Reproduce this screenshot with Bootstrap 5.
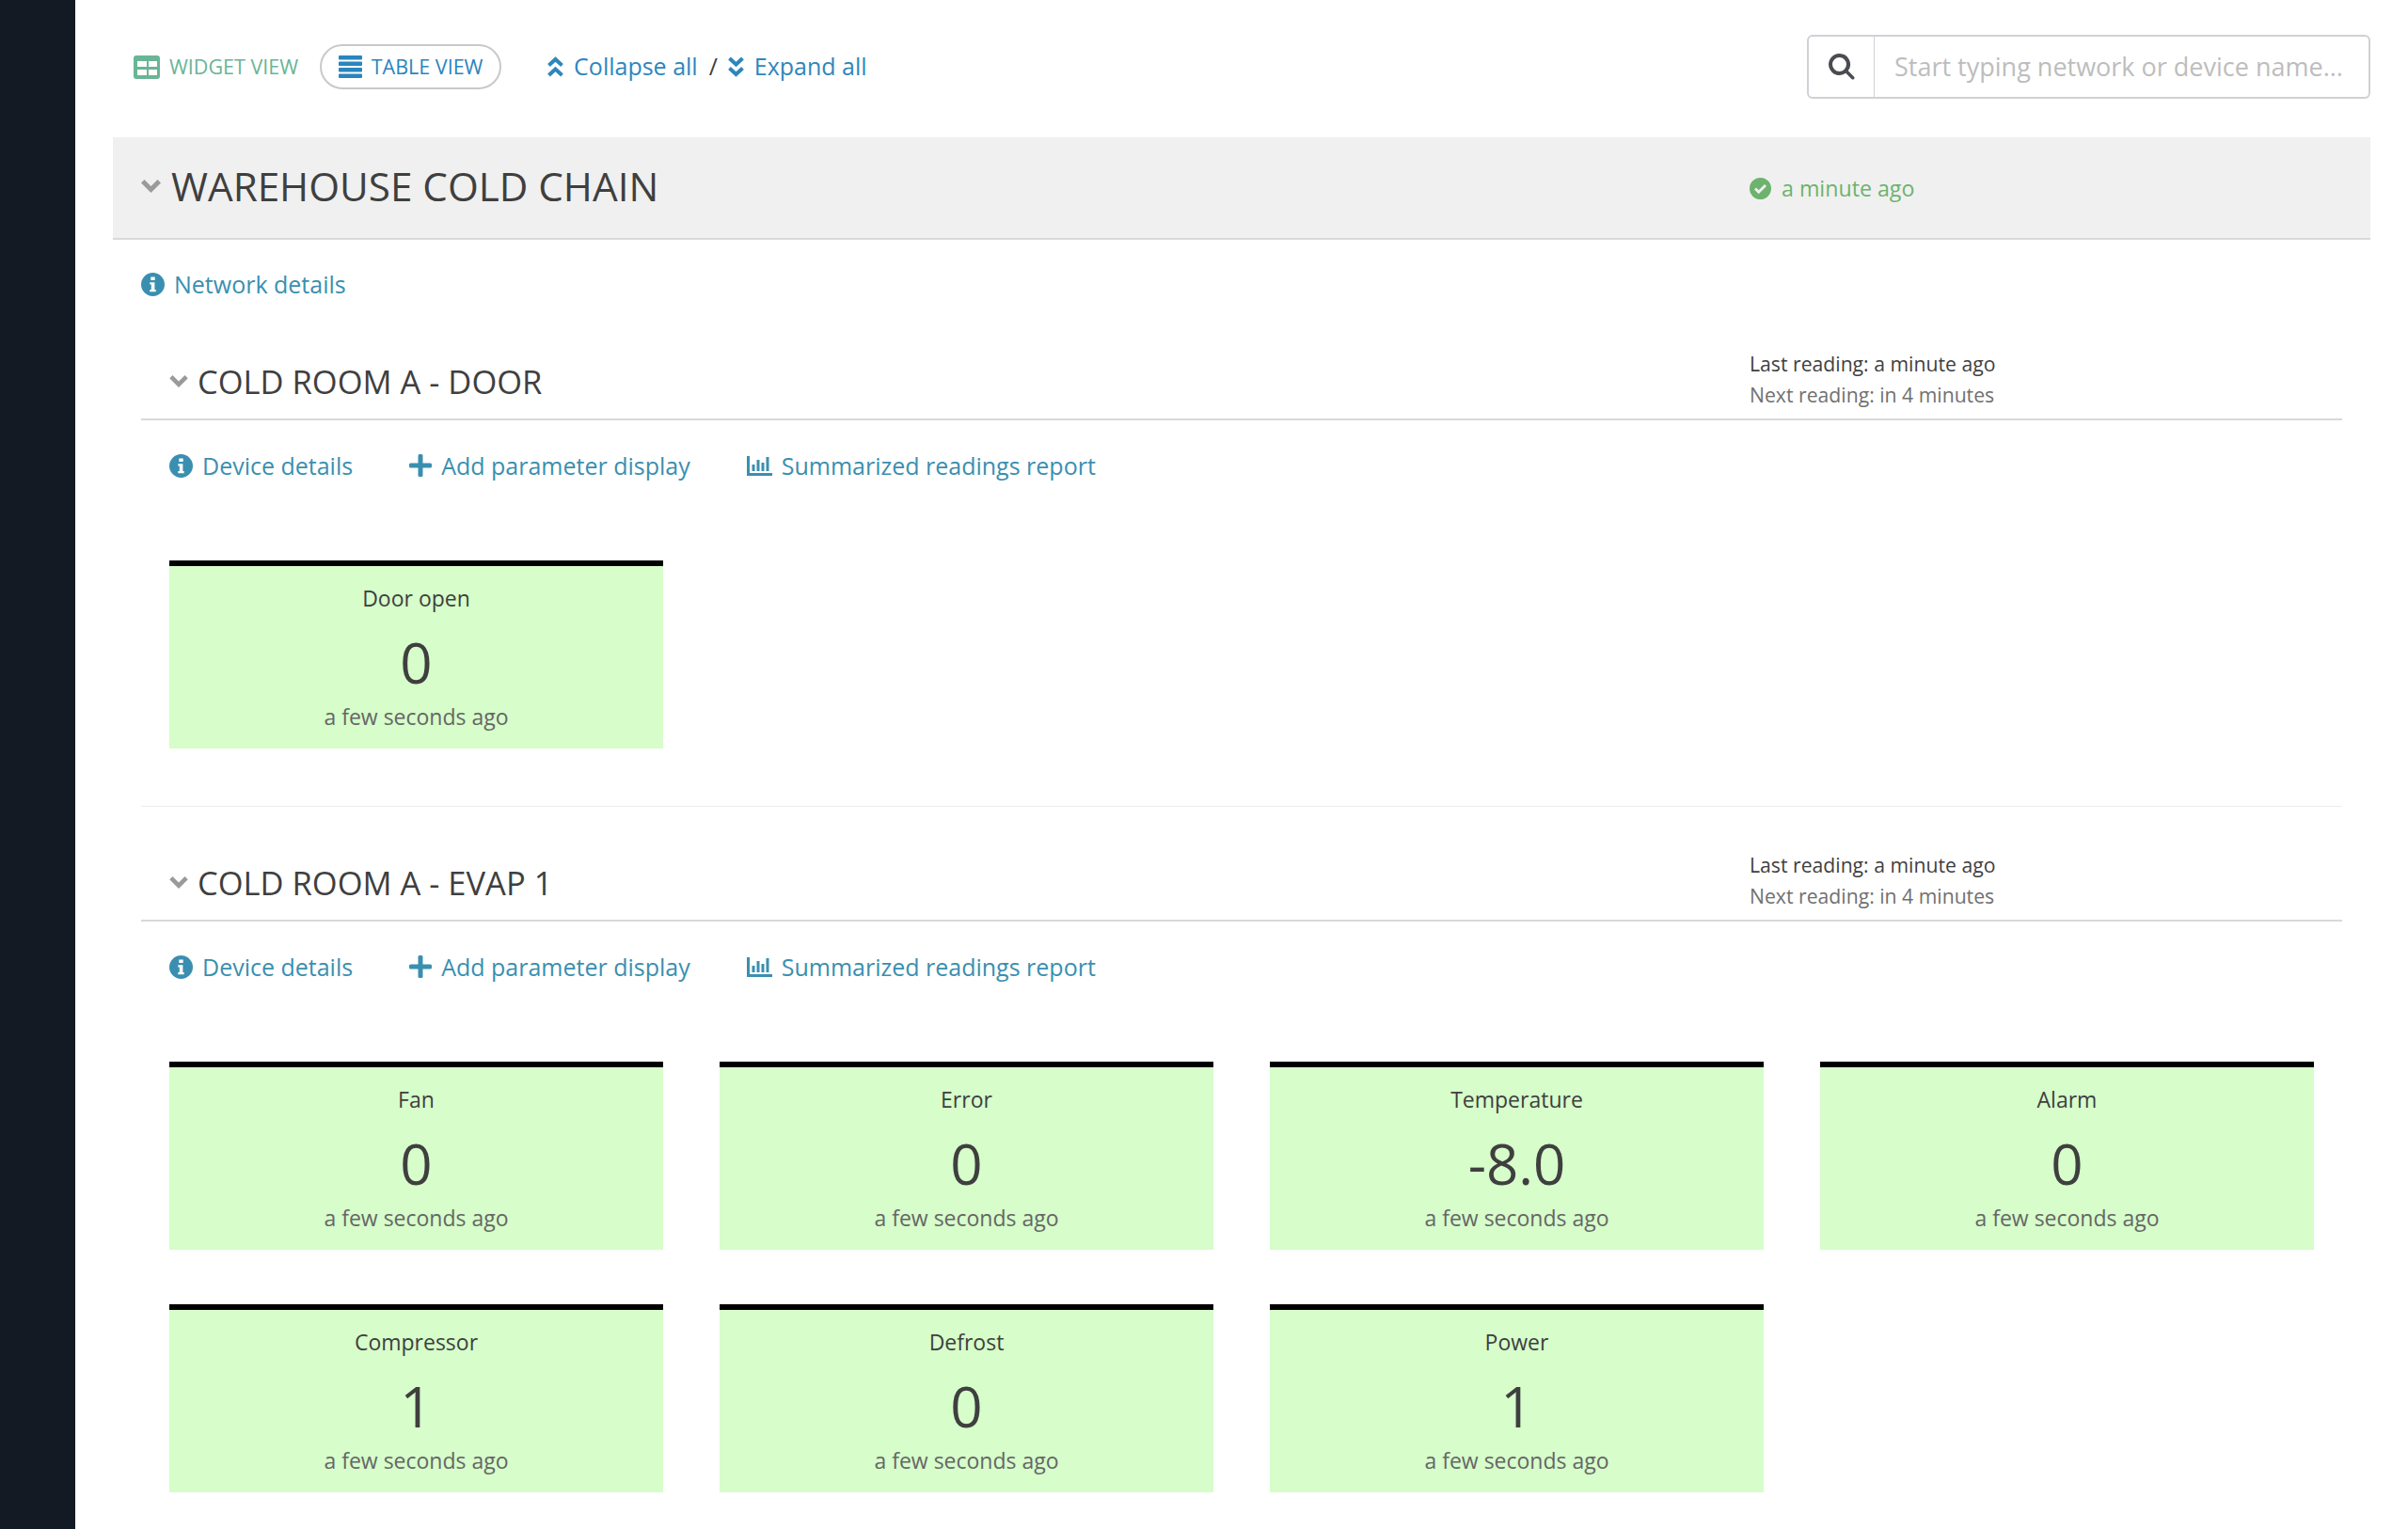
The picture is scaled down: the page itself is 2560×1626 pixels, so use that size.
<!DOCTYPE html>
<html lang="en">
  <head>
    <meta charset="UTF-8" />
    <meta name="viewport" content="width=device-width, initial-scale=1.0" />
    <title>Dashboard</title>
    <link href="https://cdn.jsdelivr.net/npm/bootstrap@5.3.0/dist/css/bootstrap.min.css" rel="stylesheet" crossorigin="anonymous" />
    <style>
      html, body {
        height: 100%;
      }
      body {
        font-family: "Open Sans", sans-serif;
        font-size: 25px;
        color: #3f3f3f;
        background: #fff;
        overflow: hidden;
      }
      a {
        text-decoration: none;
      }
      svg {
        fill: currentColor;
        flex: none;
      }
      .side-rail {
        width: 80px;
        background: #131a24;
      }
      .page-main {
        padding: 0 40px;
      }
      .top-tools {
        height: 146px;
        padding: 0 0 4px 22px;
      }
      .view-grid {
        color: #69b596;
        font-size: 21.5px;
        gap: 10px;
      }
      .view-table {
        color: #2a85bf;
        font-size: 21.5px;
        height: 48px;
        width: 193px;
        border: 2px solid #c9c9c9;
        border-radius: 24px;
        margin-left: 23px;
        margin-right: 49px;
        gap: 10px;
      }
      .fold-link {
        color: #2e86bd;
        gap: 11px;
      }
      .fold-sep {
        margin: 0 11px 0 12px;
      }
      .find-box {
        width: 599px;
        height: 68px;
      }
      .find-box .input-group-text {
        background: #fff;
        border: 2px solid #cfd1d6;
        color: #4a4c52;
        width: 73px;
        justify-content: center;
        padding: 0;
      }
      .find-box .form-control {
        border: 2px solid #cfd1d6;
        border-left: 0;
        font-size: 27px;
        color: #3f3f3f;
        padding-left: 21px;
      }
      .find-box .form-control::placeholder {
        color: #bdbdbd;
      }
      .net-bar {
        height: 109px;
        background: #f0f0f0;
        border-bottom: 2px solid #d9d9d9;
        padding-left: 30px;
      }
      .net-title {
        width: 1710px;
        gap: 11px;
        padding-bottom: 2px;
      }
      .net-title h1 {
        font-size: 42.2px;
        font-weight: 400;
        margin: 0;
        color: #3f3f3f;
      }
      .fold-caret {
        color: #9a9a9a;
      }
      .net-status {
        color: #6db36d;
        font-size: 23.2px;
        gap: 11px;
        padding-top: 2px;
      }
      .info-link {
        color: #3a8fb0;
        line-height: 40px;
        gap: 10px;
      }
      .net-info {
        margin: 27px 0 48px 30px;
      }
      .unit-block {
        margin: 0 30px;
      }
      .unit-head {
        border-bottom: 2px solid #d9d9d9;
        padding: 0 0 9px 30px;
      }
      .unit-name {
        width: 1680px;
        gap: 10px;
        padding-top: 6px;
      }
      .unit-name h2 {
        font-size: 34.5px;
        font-weight: 400;
        margin: 0;
        color: #3f3f3f;
      }
      .read-times {
        font-size: 21.2px;
        line-height: 33px;
      }
      .read-next {
        color: #707070;
      }
      .unit-links {
        margin: 28px 0 81px 30px;
        gap: 60px;
      }
      .tile-wrap {
        padding: 0 30px;
      }
      .tile-row {
        --bs-gutter-x: 60px;
        --bs-gutter-y: 58px;
      }
      .tile {
        height: 200px;
        background: #d6fdca;
        border-top: 6px solid #000;
        text-align: center;
      }
      .tile-label {
        font-size: 23px;
        line-height: 32px;
        padding-top: 18px;
      }
      .tile-value {
        font-size: 60px;
        line-height: 80px;
        margin-top: 12px;
      }
      .tile-time {
        font-size: 23px;
        line-height: 32px;
        color: #666;
        margin-top: 2px;
      }
      .unit-gap {
        border-top: 1px solid #ececec;
        margin: 61px 30px 45px;
      }
    </style>
  </head>
  <body class="d-flex">
    <div class="side-rail flex-shrink-0"></div>
    <div class="page-main flex-grow-1">

      <div class="top-tools d-flex align-items-center">
        <a href="#" class="view-grid d-flex align-items-center">
          <svg width="28" height="25" viewBox="0 0 28 25"><path fill-rule="evenodd" d="M3 0h22a3 3 0 0 1 3 3v19a3 3 0 0 1-3 3H3a3 3 0 0 1-3-3V3a3 3 0 0 1 3-3zM4 6v6h10V6zM16 6v6h9V6zM4 15v6h10v-6zM16 15v6h9v-6z"/></svg>
          WIDGET VIEW
        </a>
        <a href="#" class="view-table d-flex align-items-center justify-content-center">
          <svg width="25" height="24" viewBox="0 0 25 24"><rect width="25" height="4.500" rx="1"/><rect y="6.500" width="25" height="4.500" rx="1"/><rect y="13" width="25" height="4.500" rx="1"/><rect y="19.500" width="25" height="4.500" rx="1"/></svg>
          TABLE VIEW
        </a>
        <a href="#" class="fold-link d-flex align-items-center">
          <svg width="17" height="22" viewBox="0 0 17 22"><path fill="none" stroke="currentColor" stroke-width="4" d="M1.500 9.500L8.500 3l7 6.500M1.500 20L8.500 13.500l7 6.500"/></svg>
          Collapse all
        </a>
        <span class="fold-sep">/</span>
        <a href="#" class="fold-link d-flex align-items-center">
          <svg width="17" height="22" viewBox="0 0 17 22"><path fill="none" stroke="currentColor" stroke-width="4" d="M1.500 2L8.500 8.500l7-6.500M1.500 12.500L8.500 19l7-6.500"/></svg>
          Expand all
        </a>
        <div class="find-box input-group ms-auto">
          <span class="input-group-text">
            <svg width="28" height="28" viewBox="0 0 28 28"><path fill-rule="evenodd" d="M11.500 0a11.500 11.500 0 0 1 9.300 18.300l6.400 6.400a1.800 1.800 0 0 1-2.500 2.500l-6.400-6.400A11.500 11.500 0 1 1 11.500 0zm0 4a7.500 7.500 0 1 0 0 15 7.500 7.500 0 0 0 0-15z"/></svg>
          </span>
          <input type="text" class="form-control" placeholder="Start typing network or device name..." />
        </div>
      </div>

      <div class="net-bar d-flex align-items-center">
        <div class="net-title d-flex align-items-center">
          <svg class="fold-caret" width="21" height="14" viewBox="0 0 21 14"><path d="M0 3.500L3.500 0l7 7 7-7L21 3.500 10.500 14z"/></svg>
          <h1>WAREHOUSE COLD CHAIN</h1>
        </div>
        <div class="net-status d-flex align-items-center">
          <svg width="23" height="23" viewBox="0 0 23 23"><path fill-rule="evenodd" d="M11.500 0a11.500 11.500 0 1 1 0 23 11.500 11.500 0 0 1 0-23zM9.700 17.300l8.300-8.300-2-2-6.300 6.300-2.700-2.700-2 2z"/></svg>
          a minute ago
        </div>
      </div>

      <a href="#" class="info-link net-info d-flex align-items-center">
        <svg width="25" height="25" viewBox="0 0 25 25"><path fill-rule="evenodd" d="M12.500 0a12.500 12.500 0 1 1 0 25 12.500 12.500 0 0 1 0-25zM10.300 4.500v3.600h4.400V4.500zM9.300 10.200v2.300h1.500v5.400H9.300v2.400h6.400v-2.400h-1.300v-7.700z"/></svg>
        Network details
      </a>

      <div class="unit-block">
        <div class="unit-head d-flex align-items-center">
          <div class="unit-name d-flex align-items-center">
            <svg class="fold-caret" width="20" height="13" viewBox="0 0 21 14"><path d="M0 3.500L3.500 0l7 7 7-7L21 3.500 10.500 14z"/></svg>
            <h2>COLD ROOM A - DOOR</h2>
          </div>
          <div class="read-times">
            <div>Last reading: a minute ago</div>
            <div class="read-next">Next reading: in 4 minutes</div>
          </div>
        </div>
        <div class="unit-links d-flex">
          <a href="#" class="info-link d-flex align-items-center">
            <svg width="25" height="25" viewBox="0 0 25 25"><path fill-rule="evenodd" d="M12.500 0a12.500 12.500 0 1 1 0 25 12.500 12.500 0 0 1 0-25zM10.300 4.500v3.600h4.400V4.500zM9.300 10.200v2.300h1.500v5.400H9.300v2.400h6.400v-2.400h-1.300v-7.700z"/></svg>
            Device details
          </a>
          <a href="#" class="info-link d-flex align-items-center">
            <svg width="24" height="24" viewBox="0 0 24 24"><path d="M9.500 1.500a1.500 1.500 0 0 1 1.500-1.500h2a1.500 1.500 0 0 1 1.500 1.500v8h8a1.500 1.500 0 0 1 1.500 1.500v2a1.500 1.500 0 0 1-1.500 1.500h-8v8a1.500 1.500 0 0 1-1.500 1.500h-2a1.500 1.500 0 0 1-1.500-1.500v-8h-8A1.500 1.500 0 0 1 0 13v-2a1.500 1.500 0 0 1 1.500-1.500h8z"/></svg>
            Add parameter display
          </a>
          <a href="#" class="info-link d-flex align-items-center">
            <svg width="27" height="21" viewBox="0 0 27 21"><path d="M0 0h3v18h24v3H0zM5.500 9h3v7h-3zM10.500 4h3v12h-3zM15.500 7h3v9h-3zM20.500 1h3v15h-3z"/></svg>
            Summarized readings report
          </a>
        </div>
        <div class="tile-wrap">
          <div class="row tile-row">
            <div class="col-3">
              <div class="tile">
                <div class="tile-label">Door open</div>
                <div class="tile-value">0</div>
                <div class="tile-time">a few seconds ago</div>
              </div>
            </div>
          </div>
        </div>
      </div>

      <div class="unit-gap"></div>

      <div class="unit-block">
        <div class="unit-head d-flex align-items-center">
          <div class="unit-name d-flex align-items-center">
            <svg class="fold-caret" width="20" height="13" viewBox="0 0 21 14"><path d="M0 3.500L3.500 0l7 7 7-7L21 3.500 10.500 14z"/></svg>
            <h2>COLD ROOM A - EVAP 1</h2>
          </div>
          <div class="read-times">
            <div>Last reading: a minute ago</div>
            <div class="read-next">Next reading: in 4 minutes</div>
          </div>
        </div>
        <div class="unit-links d-flex">
          <a href="#" class="info-link d-flex align-items-center">
            <svg width="25" height="25" viewBox="0 0 25 25"><path fill-rule="evenodd" d="M12.500 0a12.500 12.500 0 1 1 0 25 12.500 12.500 0 0 1 0-25zM10.300 4.500v3.600h4.400V4.500zM9.300 10.200v2.300h1.500v5.400H9.300v2.400h6.400v-2.400h-1.300v-7.700z"/></svg>
            Device details
          </a>
          <a href="#" class="info-link d-flex align-items-center">
            <svg width="24" height="24" viewBox="0 0 24 24"><path d="M9.500 1.500a1.500 1.500 0 0 1 1.500-1.500h2a1.500 1.500 0 0 1 1.500 1.500v8h8a1.500 1.500 0 0 1 1.500 1.500v2a1.500 1.500 0 0 1-1.500 1.500h-8v8a1.500 1.500 0 0 1-1.500 1.500h-2a1.500 1.500 0 0 1-1.500-1.500v-8h-8A1.500 1.500 0 0 1 0 13v-2a1.500 1.500 0 0 1 1.500-1.500h8z"/></svg>
            Add parameter display
          </a>
          <a href="#" class="info-link d-flex align-items-center">
            <svg width="27" height="21" viewBox="0 0 27 21"><path d="M0 0h3v18h24v3H0zM5.500 9h3v7h-3zM10.500 4h3v12h-3zM15.500 7h3v9h-3zM20.500 1h3v15h-3z"/></svg>
            Summarized readings report
          </a>
        </div>
        <div class="tile-wrap">
          <div class="row tile-row" id="evapTiles"></div>
        </div>
      </div>
    </div>

    <script src="https://cdn.jsdelivr.net/npm/bootstrap@5.3.0/dist/js/bootstrap.bundle.min.js" crossorigin="anonymous"></script>
    <script>
      const evapData = [
        ["Fan", "0"], ["Error", "0"], ["Temperature", "-8.0"], ["Alarm", "0"],
        ["Compressor", "1"], ["Defrost", "0"], ["Power", "1"]
      ];
      const evapRow = document.getElementById("evapTiles");
      evapData.forEach(([label, value]) => {
        const col = document.createElement("div");
        col.className = "col-3";
        col.innerHTML = `
          <div class="tile">
            <div class="tile-label">${label}</div>
            <div class="tile-value">${value}</div>
            <div class="tile-time">a few seconds ago</div>
          </div>`;
        evapRow.appendChild(col);
      });
    </script>
  </body>
</html>
